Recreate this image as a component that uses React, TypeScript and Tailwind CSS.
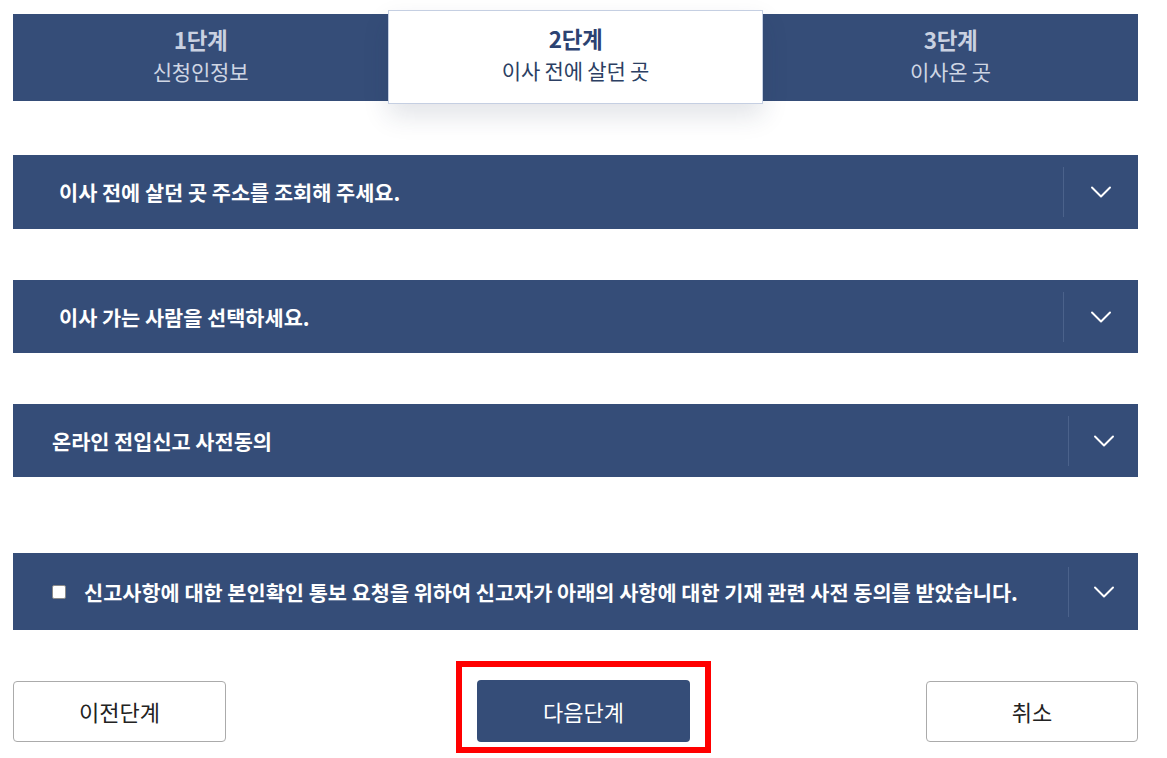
import { ChevronDown } from 'lucide-react'

const font = { fontFamily: '"Noto Sans CJK KR", "Noto Sans", sans-serif' }

const steps = [
  { no: '1단계', label: '신청인정보' },
  { no: '2단계', label: '이사 전에 살던 곳' },
  { no: '3단계', label: '이사온 곳' },
]

function Accordion({
  title,
  className,
  pad,
  side,
  checkbox,
}: {
  title: string
  className: string
  pad: string
  side: string
  checkbox?: boolean
}) {
  return (
    <div className={`flex items-center bg-[#354d78] text-white ${className}`}>
      <div className={`flex flex-1 items-center gap-[18px] ${pad}`}>
        {checkbox && (
          <span className="inline-block h-[14px] w-[14px] rounded-[2px] border border-[#8a8a8a] bg-white" />
        )}
        <span className="text-[20.8px] font-bold leading-7">{title}</span>
      </div>
      <div className={`flex h-[50px] items-center justify-center border-l border-[#4b628b] ${side}`}>
        <ChevronDown className="h-[36px] w-[36px]" strokeWidth={1.3} />
      </div>
    </div>
  )
}

export default function App() {
  return (
    <div className="min-h-screen bg-white pl-[13px] pt-[14px] text-[#222]" style={font}>
      <div className="w-[1125px]">
        {/* 단계 */}
        <div className="flex h-[87px] bg-[#354d78]">
          {steps.map((s, i) =>
            i === 1 ? (
              <div
                key={s.no}
                className="relative z-10 -mt-[4px] -mb-[3px] flex w-[375px] flex-col items-center justify-center border border-[#c5cfe2] bg-white pb-[6px] shadow-[0_12px_24px_rgba(30,45,80,0.13)]"
              >
                <div className="text-[22.5px] font-bold leading-[33px] tracking-[-0.4px] text-[#2c4271]">{s.no}</div>
                <div className="text-[21px] leading-[31px] tracking-[-0.2px] text-[#2c3f63]">{s.label}</div>
              </div>
            ) : (
              <div key={s.no} className="flex w-[375px] flex-col items-center justify-center pb-[6px]">
                <div className="text-[22.5px] font-bold leading-[33px] tracking-[-0.4px] text-[#c9d1e1]">{s.no}</div>
                <div className="text-[21px] leading-[31px] tracking-[-0.2px] text-[#cfd6e4]">{s.label}</div>
              </div>
            )
          )}
        </div>

        <Accordion
          title="이사 전에 살던 곳 주소를 조회해 주세요."
          className="mt-[54px] h-[74px]"
          pad="pl-[46px]"
          side="w-[75px]"
        />
        <Accordion
          title="이사 가는 사람을 선택하세요."
          className="mt-[51px] h-[73px]"
          pad="pl-[46px]"
          side="w-[75px]"
        />
        <Accordion
          title="온라인 전입신고 사전동의"
          className="mt-[51px] h-[73px]"
          pad="pl-[39px]"
          side="w-[70px]"
        />
        <Accordion
          title="신고사항에 대한 본인확인 통보 요청을 위하여 신고자가 아래의 사항에 대한 기재 관련 사전 동의를 받았습니다."
          className="mt-[76px] h-[77px]"
          pad="pl-[39px]"
          side="w-[70px]"
          checkbox
        />

        {/* 버튼 */}
        <div className="mt-[31px] flex items-start">
          <button className="mt-[20px] h-[61px] w-[213px] rounded-[4px] border border-[#ababab] bg-white text-[22px] text-[#222]">
            이전단계
          </button>
          <div className="ml-[230px] border-[6px] border-[#ff0000] px-[15px] pt-[13px] pb-[5px]">
            <button className="h-[62px] w-[213px] rounded-[4px] bg-[#354d78] text-[22px] text-white">다음단계</button>
          </div>
          <button className="ml-auto mt-[20px] h-[61px] w-[212px] rounded-[4px] border border-[#ababab] bg-white text-[22px] text-[#222]">
            취소
          </button>
        </div>
      </div>
    </div>
  )
}
